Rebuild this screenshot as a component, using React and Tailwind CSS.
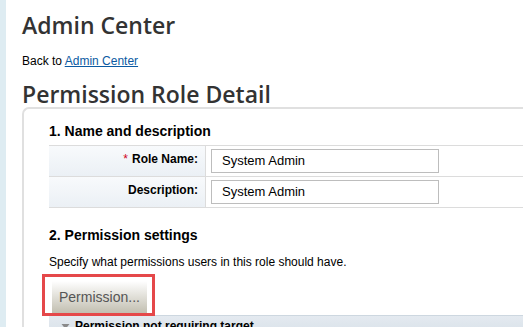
export default function App() {
    const rows = [
        { label: "Role Name:", value: "System Admin", required: true },
        { label: "Description:", value: "System Admin" },
    ];

    return (
        <div className="flex w-[523px] h-[327px] overflow-hidden bg-white font-['Liberation_Sans',Arial,sans-serif] text-[#222]">
            <div className="w-[6px] shrink-0 bg-[#deecf2]" />
            <div className="flex-1 min-w-0 pl-4">
                <h1 className="pt-[11px] text-[23px] leading-[28px] font-semibold text-[#333] font-['Open_Sans',sans-serif] whitespace-nowrap">
                    Admin Center
                </h1>
                <p className="mt-[14px] text-[12px] leading-4 text-black">
                    Back to <a href="#" className="text-[#0b5aa2] underline">Admin Center</a>
                </p>
                <h2 className="mt-[12px] text-[23px] leading-[26px] font-semibold text-[#333] font-['Open_Sans',sans-serif] whitespace-nowrap">
                    Permission Role Detail
                </h2>

                <div className="border-l-2 border-t-2 border-[#e0e0e0] rounded-tl-[7px] pl-[25px] pt-[14px] h-[300px]">
                    <h3 className="text-[14px] leading-4 font-bold text-black">1. Name and description</h3>
                    <div className="mt-[6px] border-t border-[#dcdcdc]">
                        {rows.map((row) => (
                            <div key={row.label} className="flex h-[31px] border-b border-[#dcdcdc]">
                                <div className="w-[157px] shrink-0 border-r border-[#dcdcdc] bg-gradient-to-b from-[#f8fafc] to-[#ebf0f5] text-right pr-[7px] pt-[5px] text-[12px] leading-4 font-bold text-black">
                                    {row.required && <span className="text-[#d0021b] font-normal mr-1">*</span>}
                                    {row.label}
                                </div>
                                <div className="pl-[5px] flex items-center">
                                    <div className="w-[228px] h-[24px] border border-[#bdbdbd] pl-[10px] flex items-center text-[13px] text-black whitespace-nowrap">
                                        {row.value}
                                    </div>
                                </div>
                            </div>
                        ))}
                    </div>

                    <h3 className="mt-[19px] text-[14px] leading-4 font-bold text-black">2. Permission settings</h3>
                    <p className="mt-[11px] text-[12px] leading-4 text-black whitespace-nowrap">
                        Specify what permissions users in this role should have.
                    </p>

                    <div className="relative mt-[11px] ml-[3px] w-fit">
                        <button className="w-[95px] h-[32px] bg-gradient-to-b from-white to-[#c2bfb1] text-[14px] text-[#555] text-left pl-[7px] whitespace-nowrap">
                            Permission...
                        </button>
                        <div className="absolute left-[-10px] top-[-7px] w-[113px] h-[42px] border-[3px] border-[#e5484a] pointer-events-none" />
                    </div>

                    <div className="mt-[2px] border-t border-[#cdd7e0] bg-gradient-to-b from-[#e4eaf0] to-[#d8e1e9] pl-3 pt-[2px] h-[20px] flex items-start gap-[5px] text-[12px] leading-4 font-bold text-black whitespace-nowrap">
                        <svg width="9" height="16" viewBox="0 0 9 16" className="shrink-0">
                            <path d="M0.5 6 L8.5 6 L4.5 11 Z" fill="#8a8a8a" />
                        </svg>
                        Permission not requiring target
                    </div>
                </div>
            </div>
        </div>
    );
}
